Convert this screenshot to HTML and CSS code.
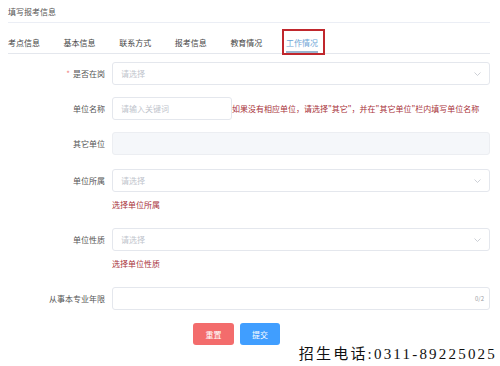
FILE: index.html
```html
<!DOCTYPE html>
<html lang="zh">
<head>
<meta charset="utf-8">
<link rel="stylesheet" href="styles.css">
</head>
<body>
<div class="page">
  <div class="title">填写报考信息</div>
  <div class="tabs">
    <div class="tab">考点信息</div>
    <div class="tab">基本信息</div>
    <div class="tab">联系方式</div>
    <div class="tab">报考信息</div>
    <div class="tab">教育情况</div>
    <div class="tab active">工作情况</div>
  </div>
  <div class="form">
    <div class="item r1">
      <label class="label"><span class="star">*</span>是否在岗</label>
      <div class="control select"><span class="ph">请选择</span><svg class="chev" width="7" height="4" viewBox="0 0 7 4"><path d="M0.5 0.5 L3.5 3.5 L6.5 0.5" fill="none" stroke="#c0c4cc" stroke-width="0.8"/></svg></div>
    </div>
    <div class="item r2">
      <label class="label">单位名称</label>
      <div class="control short"><span class="ph">请输入关键词</span></div>
      <span class="hint">如果没有相应单位，请选择"其它"，并在"其它单位"栏内填写单位名称</span>
    </div>
    <div class="item r3">
      <label class="label">其它单位</label>
      <div class="control disabled"></div>
    </div>
    <div class="item r4">
      <label class="label">单位所属</label>
      <div class="col">
        <div class="control select"><span class="ph">请选择</span><svg class="chev" width="7" height="4" viewBox="0 0 7 4"><path d="M0.5 0.5 L3.5 3.5 L6.5 0.5" fill="none" stroke="#c0c4cc" stroke-width="0.8"/></svg></div>
        <div class="error">选择单位所属</div>
      </div>
    </div>
    <div class="item r5">
      <label class="label">单位性质</label>
      <div class="col">
        <div class="control select"><span class="ph">请选择</span><svg class="chev" width="7" height="4" viewBox="0 0 7 4"><path d="M0.5 0.5 L3.5 3.5 L6.5 0.5" fill="none" stroke="#c0c4cc" stroke-width="0.8"/></svg></div>
        <div class="error">选择单位性质</div>
      </div>
    </div>
    <div class="item r6">
      <label class="label">从事本专业年限</label>
      <div class="control count"><span class="counter">0/2</span></div>
    </div>
    <div class="buttons">
      <button class="btn reset">重置</button>
      <button class="btn submit">提交</button>
    </div>
  </div>
  <div class="watermark">招生电话:0311-89225025</div>
</div>
</body>
</html>
```
FILE: styles.css
```css
* { box-sizing: border-box; }
html, body { margin: 0; padding: 0; background: #fff; }
body {
  width: 500px;
  height: 366px;
  overflow: hidden;
  font-family: "Noto Sans CJK SC", "Noto Sans", sans-serif;
  font-size: 8px;
  color: #606266;
}
.page {
  position: relative;
  height: 366px;
  padding: 0 10px 0 8px;
}
.title {
  height: 23px;
  line-height: 24px;
  color: #555;
  border-bottom: 1px solid #ebeef5;
}
.tabs {
  display: flex;
  gap: 23.6px;
  margin-top: 6px;
  border-bottom: 1px solid #e4e7ed;
}
.tab {
  position: relative;
  height: 24px;
  padding-top: 6px;
  line-height: 16px;
  border-bottom: 2px solid transparent;
  color: #444;
}
.tab.active {
  color: #6ea5d6;
  border-bottom-color: #9ab6d0;
}
.tab.active::after {
  content: "";
  position: absolute;
  left: -4px;
  right: -7px;
  top: 0;
  bottom: -4px;
  border: 2px solid #c0272d;
}
.form {
  padding-top: 8px;
}
.item {
  display: flex;
  align-items: flex-start;
}
.label {
  width: 104px;
  flex: none;
  text-align: right;
  padding-right: 7px;
  height: 23px;
  line-height: 23px;
  color: #555;
}
.star { color: #f08080; margin-right: 3px; }
.col { flex: 1; display: flex; flex-direction: column; }
.control {
  flex: 1;
  position: relative;
  height: 23px;
  border: 1px solid #e4e7ed;
  border-radius: 3px;
  padding-left: 8px;
  line-height: 21px;
  display: flex;
  align-items: center;
}
.ph { color: #c0c4cc; }
.chev { position: absolute; right: 8px; top: 9px; }
.control.short { flex: none; width: 120px; }
.hint { color: #a8323a; line-height: 23px; white-space: nowrap; }
.control.disabled { background: #f5f7fa; border-color: #eceef2; }
.counter { position: absolute; right: 5px; color: #9a9da3; font-size: 6px; }
.error { color: #a8323a; line-height: 14px; margin-top: 6px; }
.r1, .r2 { margin-bottom: 12px; }
.r3 { margin-bottom: 14px; }
.r4 { margin-bottom: 16px; }
.r5 { margin-bottom: 16px; }
.r6 { margin-bottom: 13px; }
.buttons {
  display: flex;
  gap: 6px;
  padding-left: 185px;
}
.btn {
  height: 22px;
  width: 41px;
  border: none;
  border-radius: 3px;
  color: #fff;
  font-family: "Noto Sans CJK SC", sans-serif;
  font-size: 8px;
  padding: 0;
}
.reset { background: #f36c6c; }
.submit { background: #409eff; width: 40px; }
.watermark {
  position: absolute;
  right: 3px;
  bottom: 4px;
  font-family: "Liberation Serif", "Noto Sans CJK SC", serif;
  font-size: 15px;
  line-height: 16px;
  color: #111;
  letter-spacing: 2.2px;
  background: #fff;
}
```
